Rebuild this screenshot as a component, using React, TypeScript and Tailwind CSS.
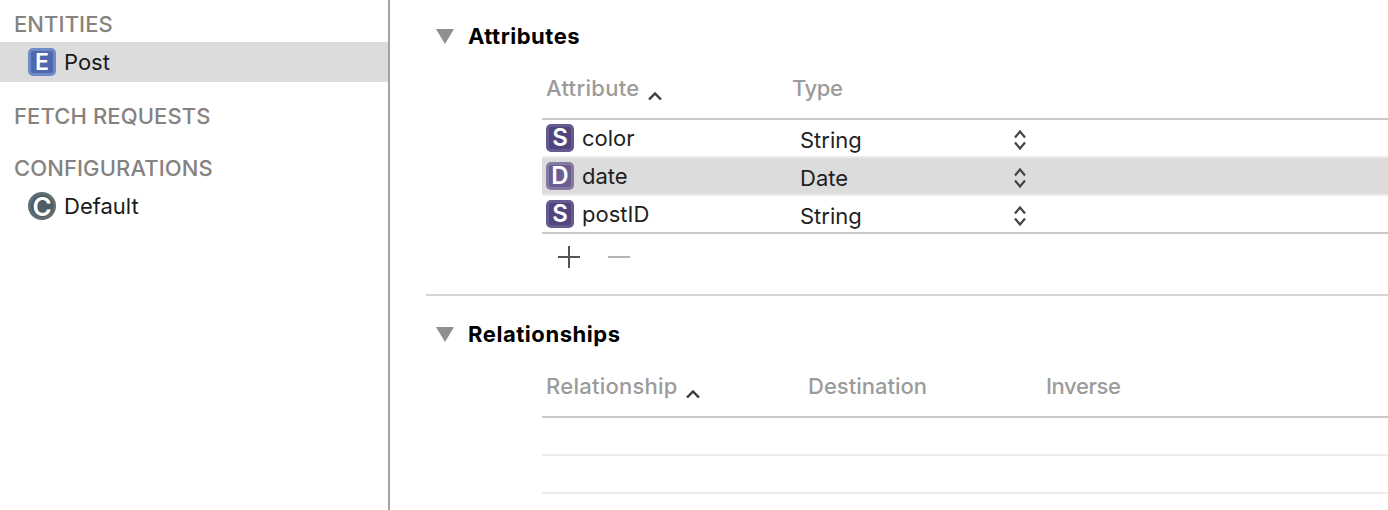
const font = "font-['Inter','Liberation_Sans',sans-serif]";

function Triangle() {
  return (
    <svg width="18" height="15" viewBox="0 0 18 15" className="shrink-0">
      <path d="M0 0H18L9 15Z" fill="#8f8f8f" />
    </svg>
  );
}

function SortUp() {
  return (
    <svg width="14" height="8" viewBox="0 0 14 8" className="shrink-0">
      <path d="M1 7.5L7 1.5L13 7.5" fill="none" stroke="#3c3c3c" strokeWidth="2.4" />
    </svg>
  );
}

function Stepper() {
  return (
    <svg width="12" height="20" viewBox="0 0 12 20" className="mt-[4px]">
      <path d="M1 7.5L6 1.5L11 7.5" fill="none" stroke="#444" strokeWidth="2.2" />
      <path d="M1 12.5L6 18.5L11 12.5" fill="none" stroke="#444" strokeWidth="2.2" />
    </svg>
  );
}

function TypeBadge({ letter, selected }: { letter: string; selected?: boolean }) {
  return (
    <span
      className={`flex h-7 w-7 shrink-0 items-center justify-center rounded-[5px] border-[3px] text-[24px] font-semibold text-white ${
        selected ? "border-[#85799f] bg-[#6a5d92]" : "border-[#665b90] bg-[#51457f]"
      }`}
    >
      {letter}
    </span>
  );
}

function SidebarHeading({ children, className }: { children: string; className?: string }) {
  return (
    <div className={`pl-[14px] text-[22px] leading-[26px] font-medium tracking-[0.1px] text-[#86827f] ${className ?? ""}`}>
      {children}
    </div>
  );
}

function AttributeRow({ letter, name, type, selected }: { letter: string; name: string; type: string; selected?: boolean }) {
  return (
    <div
      className={`flex items-center text-[22px] text-[#1f1f1f] ${
        selected ? "h-10 border-y-2 border-[#ececec] bg-[#dcdcdc]" : "h-9"
      }`}
    >
      <div className="flex w-[258px] items-center gap-2 pl-[4px]">
        <TypeBadge letter={letter} selected={selected} />
        <span>{name}</span>
      </div>
      <span className="w-[214px] pt-[4px]">{type}</span>
      <Stepper />
    </div>
  );
}

export default function App() {
  return (
    <div className={`flex h-[510px] w-[1388px] overflow-hidden bg-white ${font}`}>
      {/* Sidebar */}
      <aside className="h-full w-[390px] shrink-0 border-r-2 border-[#a3a3a3] pt-[11px]">
        <SidebarHeading>ENTITIES</SidebarHeading>
        <div className="mt-[5px] flex h-10 items-center gap-2 bg-[#dcdcdc] pl-[28px] text-[22px] text-[#1a1a1a]">
          <span className="flex h-7 w-7 items-center justify-center rounded-[5px] border-[3px] border-[#6f8ac9] bg-[#4f68ad] text-[23px] font-semibold text-white">
            E
          </span>
          <span>Post</span>
        </div>
        <SidebarHeading className="mt-[21px]">FETCH REQUESTS</SidebarHeading>
        <SidebarHeading className="mt-[26px]">CONFIGURATIONS</SidebarHeading>
        <div className="mt-[11px] flex h-7 items-center gap-2 pl-[28px] text-[22px] text-[#1a1a1a]">
          <span className="flex h-7 w-7 items-center justify-center rounded-full border-[3px] border-[#5f6e74] bg-[#4f5e64] text-[26px] font-semibold text-white">
            C
          </span>
          <span>Default</span>
        </div>
      </aside>

      {/* Editor */}
      <main className="flex-1 pl-9 pt-[22px]">
        <div className="flex h-7 items-center gap-[14px] pl-[10px] text-[22px] font-bold tracking-[0.5px] text-black">
          <Triangle />
          <span>Attributes</span>
        </div>
        <div className="ml-[116px]">
          <div className="flex h-[70px] items-center border-b-2 border-[#c9c9c9] pt-[8px] text-[22px] font-medium text-[#9b9b9b]">
            <div className="flex w-[250px] items-center gap-2 pl-[4px] tracking-[0.3px]">
              <span>Attribute</span>
              <span className="mt-[16px]">
                <SortUp />
              </span>
            </div>
            <span className="tracking-[-0.4px]">Type</span>
          </div>
          <AttributeRow letter="S" name="color" type="String" />
          <AttributeRow letter="D" name="date" type="Date" selected />
          <AttributeRow letter="S" name="postID" type="String" />
          <div className="border-t-2 border-[#c9c9c9]">
            <div className="flex h-[46px] items-center gap-[28px] pl-4">
              <svg width="22" height="22" viewBox="0 0 22 22">
                <path d="M11 0V22M0 11H22" stroke="#555" strokeWidth="2" />
              </svg>
              <svg width="22" height="22" viewBox="0 0 22 22">
                <path d="M0 11H22" stroke="#b4b4b4" strokeWidth="2" />
              </svg>
            </div>
          </div>
        </div>

        <div className="mt-[14px] border-t-2 border-[#d6d6d6] pt-[24px]">
          <div className="flex h-7 items-center gap-[14px] pl-[10px] text-[22px] font-bold tracking-[0.55px] text-black">
            <Triangle />
            <span>Relationships</span>
          </div>
        </div>
        <div className="ml-[116px]">
          <div className="flex h-[70px] items-center border-b-2 border-[#c9c9c9] pt-[8px] text-[22px] font-medium text-[#9b9b9b]">
            <div className="flex w-[266px] items-center gap-2 pl-[4px] tracking-[0.25px]">
              <span>Relationship</span>
              <span className="mt-[16px]">
                <SortUp />
              </span>
            </div>
            <span className="w-[238px]">Destination</span>
            <span className="tracking-[-0.4px]">Inverse</span>
          </div>
          <div className="h-[38px] border-b-2 border-[#ececec]" />
          <div className="h-[38px] border-b-2 border-[#ececec]" />
        </div>
      </main>
    </div>
  );
}
